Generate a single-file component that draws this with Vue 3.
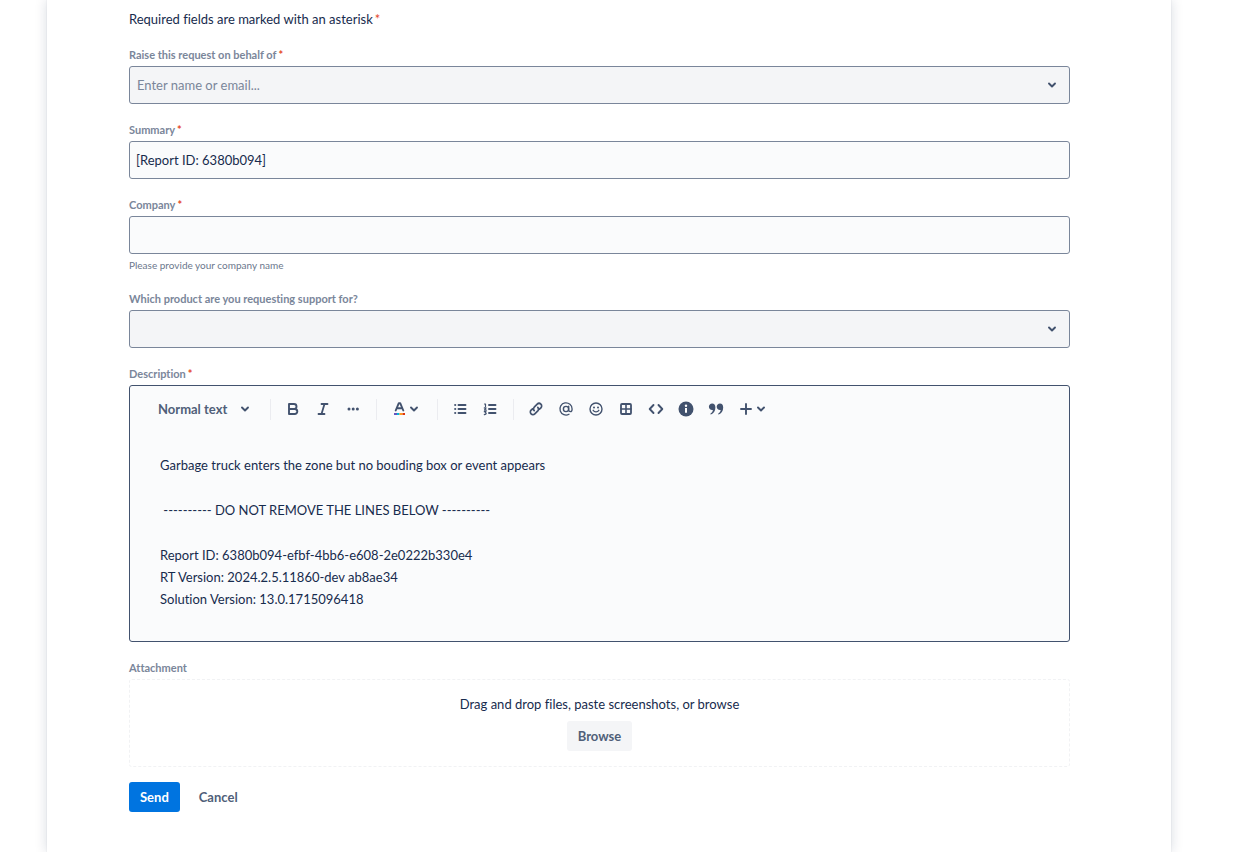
<script setup>
import { ref } from 'vue'

const summary = ref('[Report ID: 6380b094]')
const company = ref('')
const behalf = ref('')
const product = ref('')
const paragraphs = [
  'Garbage truck enters the zone but no bouding box or event appears',
  ' ---------- DO NOT REMOVE THE LINES BELOW ----------',
  'Report ID: 6380b094-efbf-4bb6-e608-2e0222b330e4\nRT Version: 2024.2.5.11860-dev ab8ae34\nSolution Version: 13.0.1715096418',
]
</script>

<template>
  <main class="page">
    <form class="card" @submit.prevent>
      <p class="intro">Required fields are marked with an asterisk<span class="req">*</span></p>

      <div class="field">
        <label for="behalf">Raise this request on behalf of<span class="req">*</span></label>
        <div class="select">
          <select id="behalf" v-model="behalf" required>
            <option value="" disabled>Enter name or email...</option>
          </select>
          <svg class="chev" viewBox="0 0 10 10" aria-hidden="true"><path d="M2 3.5 5 6.5 8 3.5" /></svg>
        </div>
      </div>

      <div class="field">
        <label for="summary">Summary<span class="req">*</span></label>
        <input id="summary" v-model="summary" type="text" required />
      </div>

      <div class="field">
        <label for="company">Company<span class="req">*</span></label>
        <input id="company" v-model="company" type="text" required aria-describedby="company-help" />
        <p id="company-help" class="help">Please provide your company name</p>
      </div>

      <div class="field">
        <label for="product">Which product are you requesting support for?</label>
        <div class="select">
          <select id="product" v-model="product">
            <option value=""></option>
          </select>
          <svg class="chev" viewBox="0 0 10 10" aria-hidden="true"><path d="M2 3.5 5 6.5 8 3.5" /></svg>
        </div>
      </div>

      <div class="field">
        <span id="desc-label" class="label">Description<span class="req">*</span></span>
        <div class="editor">
          <div class="toolbar" role="toolbar" aria-label="Formatting">
            <button type="button" class="style-btn">
              Normal text
              <svg class="chev" viewBox="0 0 10 10" aria-hidden="true"><path d="M2 3.5 5 6.5 8 3.5" /></svg>
            </button>
            <span class="sep"></span>
            <div class="group">
              <button type="button" class="tool" aria-label="Bold">
                <svg viewBox="0 0 16 16"><path class="s" stroke-width="1.9" d="M4 3h5a2.4 2.4 0 0 1 0 5H4zM4 8h5.8a2.5 2.5 0 0 1 0 5H4z" /></svg>
              </button>
              <button type="button" class="tool" aria-label="Italic">
                <svg viewBox="0 0 16 16"><path class="s" stroke-width="1.8" d="M6.5 3H12.5M3.500 13H9.500M9.500 3 6.500 13" /></svg>
              </button>
              <button type="button" class="tool" aria-label="More formatting">
                <svg viewBox="0 0 16 16"><circle cx="4" cy="8" r="1.5" /><circle cx="8.200" cy="8" r="1.5" /><circle cx="12.400" cy="8" r="1.5" /></svg>
              </button>
            </div>
            <span class="sep"></span>
            <button type="button" class="tool wide" aria-label="Text color">
              <svg viewBox="0 0 16 16">
                <path class="s" stroke-width="1.900" d="M4.700 9.500 7.800 2.200H9.200L12.300 9.500M5.900 7.300H11.100" />
                <path fill="#6554c0" d="M3 12h3v2h-3z" /><path fill="#00b8d9" d="M6 12h2.500v2h-2.500z" /><path fill="#ff991f" d="M8.500 12h3v2h-3z" /><path fill="#de350b" d="M11.500 12h2.500v2h-2.500z" />
              </svg>
              <svg class="chev" viewBox="0 0 10 10"><path d="M2 3.500 5 6.500 8 3.500" /></svg>
            </button>
            <span class="sep"></span>
            <div class="group">
              <button type="button" class="tool" aria-label="Bullet list">
                <svg viewBox="0 0 16 16"><path class="s" stroke-width="1.900" d="M6.500 4h7M6.500 8h7M6.500 12h7" /><circle cx="3.200" cy="4" r="1.100" /><circle cx="3.200" cy="8" r="1.100" /><circle cx="3.200" cy="12" r="1.100" /></svg>
              </button>
              <button type="button" class="tool" aria-label="Numbered list">
                <svg viewBox="0 0 16 16"><path class="s" stroke-width="1.900" d="M7 4h6.500M7 8h6.500M7 12h6.500" /><path class="s" stroke-width="1.200" d="M2.500 3h1v2.500M2.300 6.900h1.700L2.500 9.200H4.300M2.300 10.700H4L3.200 12c1.600 0 1.200 1.800-.900 1.600" /></svg>
              </button>
            </div>
            <span class="sep"></span>
            <div class="group">
              <button type="button" class="tool" aria-label="Link">
                <svg viewBox="0 0 16 16"><path class="s" stroke-width="1.700" d="M6.200 9.700C5 8.500 5.300 7.200 6.200 6.200L9.200 3.200A2.500 2.500 0 0 1 12.900 6.800L11.500 8.200M9.800 6.400C11 7.600 10.700 8.900 9.800 9.900L6.800 12.900A2.500 2.500 0 0 1 3.100 9.200L4.500 7.800" /></svg>
              </button>
              <button type="button" class="tool" aria-label="Mention">
                <svg viewBox="0 0 16 16"><path class="s" stroke-width="1.300" d="M11 13.300A6.100 6.100 0 1 1 14.100 8c0 1.500-.500 2.700-1.700 2.700S10.700 9.800 10.700 8.800V5.200" /><circle class="s" stroke-width="1.400" cx="8" cy="8" r="2.600" /></svg>
              </button>
              <button type="button" class="tool" aria-label="Emoji">
                <svg viewBox="0 0 16 16"><circle class="s" stroke-width="1.400" cx="8" cy="8" r="6" /><circle cx="6" cy="6.500" r="1" /><circle cx="10" cy="6.500" r="1" /><path class="s" stroke-width="1.300" d="M5.200 9.300c1.200 2 4.400 2 5.600 0" /></svg>
              </button>
              <button type="button" class="tool" aria-label="Table">
                <svg viewBox="0 0 16 16"><rect class="s" stroke-width="1.800" x="3" y="3" width="10" height="10" rx="1" /><path class="s" stroke-width="1.600" d="M8 3v10M3 8h10" /></svg>
              </button>
              <button type="button" class="tool" aria-label="Code snippet">
                <svg viewBox="0 0 16 16"><path class="s" stroke-width="1.900" d="M5.500 4 1.700 8l3.800 4M10.500 4l3.800 4-3.800 4" /></svg>
              </button>
              <button type="button" class="tool" aria-label="Info panel">
                <svg viewBox="0 0 16 16"><circle cx="8" cy="8" r="7.500" /><path fill="#fff" d="M7 7h2v4.800H7z" /><circle fill="#fff" cx="8" cy="4.800" r="1.200" /></svg>
              </button>
              <button type="button" class="tool" aria-label="Quote">
                <svg viewBox="0 0 16 16"><path d="M4.200 2.500c2 0 3.200 1.500 3.200 3.900 0 3.400-1.900 6.100-4.500 7-.500.100-.700-.400-.300-.800 1.400-1.200 2.100-2.300 2.300-3.700-2.200.400-4-1-4-3.100 0-1.900 1.400-3.300 3.300-3.300zM12 2.500c2 0 3.200 1.500 3.200 3.900 0 3.400-1.900 6.100-4.500 7-.500.100-.700-.400-.300-.800 1.400-1.200 2.100-2.300 2.300-3.700-2.200.400-4-1-4-3.100 0-1.900 1.400-3.300 3.300-3.300z" /></svg>
              </button>
              <button type="button" class="tool wide" aria-label="Insert">
                <svg viewBox="0 0 16 16"><path class="s" stroke-width="1.900" d="M8 3v10M3 8h10" /></svg>
                <svg class="chev" viewBox="0 0 10 10"><path d="M2 3.500 5 6.500 8 3.500" /></svg>
              </button>
            </div>
          </div>
          <div class="content" contenteditable="true" role="textbox" aria-multiline="true" aria-labelledby="desc-label" spellcheck="false">
            <p v-for="(text, i) in paragraphs" :key="i">{{ text }}</p>
          </div>
        </div>
      </div>

      <div class="field">
        <span id="attach-label" class="label">Attachment</span>
        <div class="dropzone" role="group" aria-labelledby="attach-label">
          <p>Drag and drop files, paste screenshots, or browse</p>
          <button type="button" class="btn subtle">Browse</button>
        </div>
      </div>

      <div class="actions">
        <button type="submit" class="btn primary">Send</button>
        <button type="button" class="btn plain">Cancel</button>
      </div>
    </form>
  </main>
</template>

<style>
body {
  background: #fff;
}
</style>

<style scoped>
.page {
  display: flex;
  min-height: 100vh;
  padding: 0 76px 0 47px;
  overflow: hidden;
  font: 13px/20px Lato, "Open Sans", sans-serif;
  font-variant-ligatures: none;
  color: #172b4d;
}
.page, .page * {
  box-sizing: border-box;
}
p {
  margin: 0;
}
button, input, select {
  font: inherit;
  color: inherit;
}
.card {
  flex: 1;
  min-width: 0;
  padding: 9px 101px 39px 82px;
  background: #fff;
  box-shadow: 0 0 1px rgba(9, 30, 66, 0.15), 0 0 12px rgba(9, 30, 66, 0.16);
}
.intro {
  margin-bottom: 18px;
}
.req {
  margin-left: 2px;
  color: #e5482a;
}
.field {
  margin-bottom: 18px;
}
label, .label {
  display: block;
  height: 16px;
  margin-bottom: 3px;
  font-size: 11px;
  line-height: 16px;
  font-weight: 700;
  color: #7a869a;
}
input, select {
  display: block;
  width: 100%;
  height: 38px;
  padding: 0 6px;
  border: 1px solid #7a869a;
  border-radius: 3px;
  background: #fafbfc;
}
.select {
  display: grid;
  align-items: center;
}
.select > * {
  grid-area: 1 / 1;
}
.select select {
  padding: 0 32px 0 7px;
  appearance: none;
  background: #f4f5f7;
  color: #7a869a;
}
.select .chev {
  justify-self: end;
  margin-right: 13px;
  pointer-events: none;
}
.chev {
  width: 10px;
  height: 10px;
  fill: none;
  stroke: #42526e;
  stroke-width: 1.9;
  stroke-linecap: round;
  stroke-linejoin: round;
}
.help {
  margin-top: 4px;
  font-size: 10px;
  line-height: 15px;
  color: #6b778c;
}
.editor {
  border: 1px solid #42526e;
  border-radius: 3px;
  background: #fafbfc;
}
.toolbar {
  display: flex;
  align-items: center;
  height: 46px;
  padding-left: 28px;
  color: #42526e;
}
.toolbar button {
  display: flex;
  align-items: center;
  height: 30px;
  padding: 0;
  border: 0;
  background: none;
}
.toolbar .style-btn {
  justify-content: space-between;
  width: 92px;
  font-weight: 700;
  color: #505f79;
}
.group {
  display: flex;
}
.tool {
  justify-content: center;
  width: 30px;
}
.toolbar .wide {
  justify-content: flex-start;
  gap: 2px;
  width: 44px;
  padding-left: 7px;
}
.tool svg:first-child {
  width: 16px;
  height: 16px;
  fill: #42526e;
}
svg .s {
  fill: none;
  stroke: #42526e;
  stroke-linecap: round;
  stroke-linejoin: round;
}
.sep {
  width: 1px;
  height: 21px;
  margin: 0 7px 0 8px;
  background: #ebecf0;
}
.style-btn + .sep {
  margin-left: 20px;
}
.wide + .sep {
  margin-left: 9px;
}
.content {
  display: grid;
  gap: 23px;
  padding: 22px 30px 31px;
  line-height: 22px;
  white-space: pre-wrap;
  outline: none;
}
.dropzone {
  display: flex;
  flex-direction: column;
  align-items: center;
  gap: 7px;
  padding: 14px 0 15px;
  border: 1px dashed #f1f2f4;
  border-radius: 3px;
}
.btn {
  height: 30px;
  padding: 0 11px;
  border: 0;
  border-radius: 3px;
  font-weight: 700;
  color: #505f79;
  background: none;
}
.subtle {
  background: #f4f5f7;
}
.primary {
  background: #0074e0;
  color: #fff;
}
.actions {
  display: flex;
  gap: 8px;
  margin-top: -3px;
}
</style>
